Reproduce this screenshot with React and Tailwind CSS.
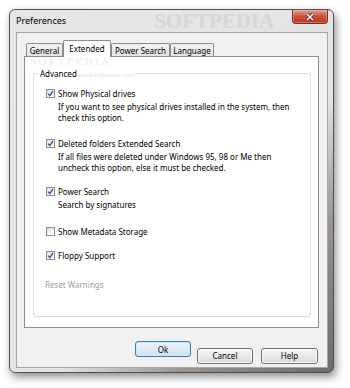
import React from 'react';

const UI_FONT = { fontFamily: '"Noto Sans", "Open Sans", sans-serif' };

// Win7 style checkbox, checked or not
function CheckBox({ checked }) {
  return (
    <span className="flex h-[9px] w-[9px] shrink-0 items-center justify-center border border-[#8e8f8f] bg-gradient-to-br from-[#dcdcdc] via-[#f4f4f4] to-[#ffffff]">
      {checked && (
        <svg width="7" height="7" viewBox="0 0 7 7">
          <path d="M1 3.6 L2.8 5.6 L6 1" fill="none" stroke="#3b58a8" strokeWidth="1.4" />
        </svg>
      )}
    </span>
  );
}

function Option({ checked = true, label, desc, className = '' }) {
  return (
    <div className={className}>
      <div className="flex h-[11px] items-center gap-[3px]">
        <CheckBox checked={checked} />
        <span className="text-[8px] leading-[11px] text-black">{label}</span>
      </div>
      {desc && (
        <div className="mt-[2px] pl-[12px] text-[8px] leading-[11px] text-black">
          {desc.map((line) => (
            <div key={line}>{line}</div>
          ))}
        </div>
      )}
    </div>
  );
}

function Tab({ label, width, active }) {
  if (active) {
    return (
      <div
        className={`${width} relative z-10 -mb-px flex h-[17px] items-start justify-center rounded-t-[2px] border border-b-0 border-[#898c95] bg-white pt-[2px] text-[8px] leading-[11px]`}
      >
        {label}
      </div>
    );
  }
  return (
    <div
      className={`${width} flex h-[13px] items-center justify-center rounded-t-[2px] border border-b-0 border-[#898c95] bg-gradient-to-b from-[#f3f3f3] to-[#e3e3e3] text-[8px] leading-[11px]`}
    >
      {label}
    </div>
  );
}

function Button({ label, primary, width = 'w-[56px]' }) {
  return (
    <button
      className={`${width} h-[16px] rounded-[3px] border text-[8px] leading-[11px] text-black ${
        primary
          ? 'border-[#3c7fb1] bg-gradient-to-b from-[#eef6fb] to-[#cfe2ee] shadow-[inset_0_0_0_1px_#c8e6f8]'
          : 'border-[#707070] bg-gradient-to-b from-[#f4f4f4] via-[#ebebeb] to-[#d6d6d6] shadow-[inset_0_0_0_1px_#fbfbfb]'
      }`}
    >
      {label}
    </button>
  );
}

export default function App() {
  return (
    <div className="h-[388px] w-[350px] overflow-hidden bg-white pl-[9px] pt-[9px]" style={UI_FONT}>
      {/* Window frame */}
      <div className="flex h-[364px] w-[325px] flex-col rounded-[6px] border border-[#4e5258] bg-[linear-gradient(135deg,#e6e6e6_0%,#e3e3e3_60%,#9a928b_78%,#6f6a66_100%)] shadow-[2px_4px_8px_rgba(0,0,0,0.45)]">
        {/* Title bar */}
        <div className="flex h-[22px] shrink-0 items-start">
          <span className="pl-[6px] pt-[5px] text-[9px] leading-[12px] text-black">Preferences</span>
          <span
            className="ml-[88px] mt-[1px] text-[21px] font-bold leading-[20px] text-[#d6d6d6]"
            style={{ fontFamily: '"Liberation Serif", serif' }}
          >
            SOFTPEDIA
          </span>
          <div className="ml-auto mr-[5px] flex h-[14px] w-[36px] items-center justify-center rounded-b-[4px] border border-t-0 border-[#7a2a20] bg-gradient-to-b from-[#e59a8d] via-[#cd4f3c] to-[#b8341f] shadow-[inset_0_0_0_1px_rgba(255,255,255,0.3)]">
            <svg width="10" height="8" viewBox="0 0 10 8">
              <path d="M2 1 L8 7 M8 1 L2 7" stroke="#5a2018" strokeWidth="3" />
              <path d="M2 1 L8 7 M8 1 L2 7" stroke="#ffffff" strokeWidth="1.6" />
            </svg>
          </div>
        </div>

        {/* Client area */}
        <div className="mb-[4px] ml-[6px] mr-[5px] flex flex-1 flex-col border border-[#a4a8ad] bg-[#f0f0f0]">
          {/* Tabs */}
          <div className="ml-[9px] mt-[7px] flex items-end">
            <Tab label="General" width="w-[37px]" />
            <Tab label="Extended" width="w-[48px]" active />
            <Tab label="Power Search" width="w-[59px]" />
            <Tab label="Language" width="w-[44px]" />
          </div>

          {/* Tab panel */}
          <div className="relative ml-[7px] flex h-[272px] w-[295px] flex-col border border-[#898c95] bg-white">
            <span
              className="absolute left-[5px] top-[-1px] text-[11px] font-bold leading-[11px] tracking-[2px] text-[#f1f1f1]"
              style={{ fontFamily: '"Liberation Serif", serif' }}
            >
              SOFTPEDIA
            </span>
            <fieldset className="relative mb-[10px] ml-[8px] mr-[7px] mt-[11px] flex-1 rounded-[3px] border border-[#d5dfe5] pl-[12px]">
              <legend className="ml-[-7px] px-[1px] text-[8px] leading-[11px] text-black">
                Advanced
                <span className="ml-[2px] text-[6px] leading-[8px] text-[#e2e2e2]">www.softpedia.com</span>
              </legend>

              <Option
                className="mt-[9px]"
                label="Show Physical drives"
                desc={['If you want to see physical drives installed in the system, then', 'check this option.']}
              />
              <Option
                className="mt-[15px]"
                label="Deleted folders Extended Search"
                desc={['If all files were deleted under Windows 95, 98 or Me then', 'uncheck this option, else it must be checked.']}
              />
              <Option className="mt-[13px]" label="Power Search" desc={['Search by signatures']} />
              <Option className="mt-[16px]" checked={false} label="Show Metadata Storage" />
              <Option className="mt-[13px]" label="Floppy Support" />
              <div className="ml-[-1px] mt-[18px] text-[8px] leading-[11px] text-[#a0a0a0]">Reset Warnings</div>
            </fieldset>
          </div>

          {/* Buttons */}
          <div className="mr-[9px] mt-[13px] flex justify-end">
            <Button label="Ok" primary />
            <div className="ml-[6px]">
              <Button label="Cancel" />
            </div>
            <div className="ml-[8px]">
              <Button label="Help" width="w-[57px]" />
            </div>
          </div>
        </div>
      </div>
    </div>
  );
}
